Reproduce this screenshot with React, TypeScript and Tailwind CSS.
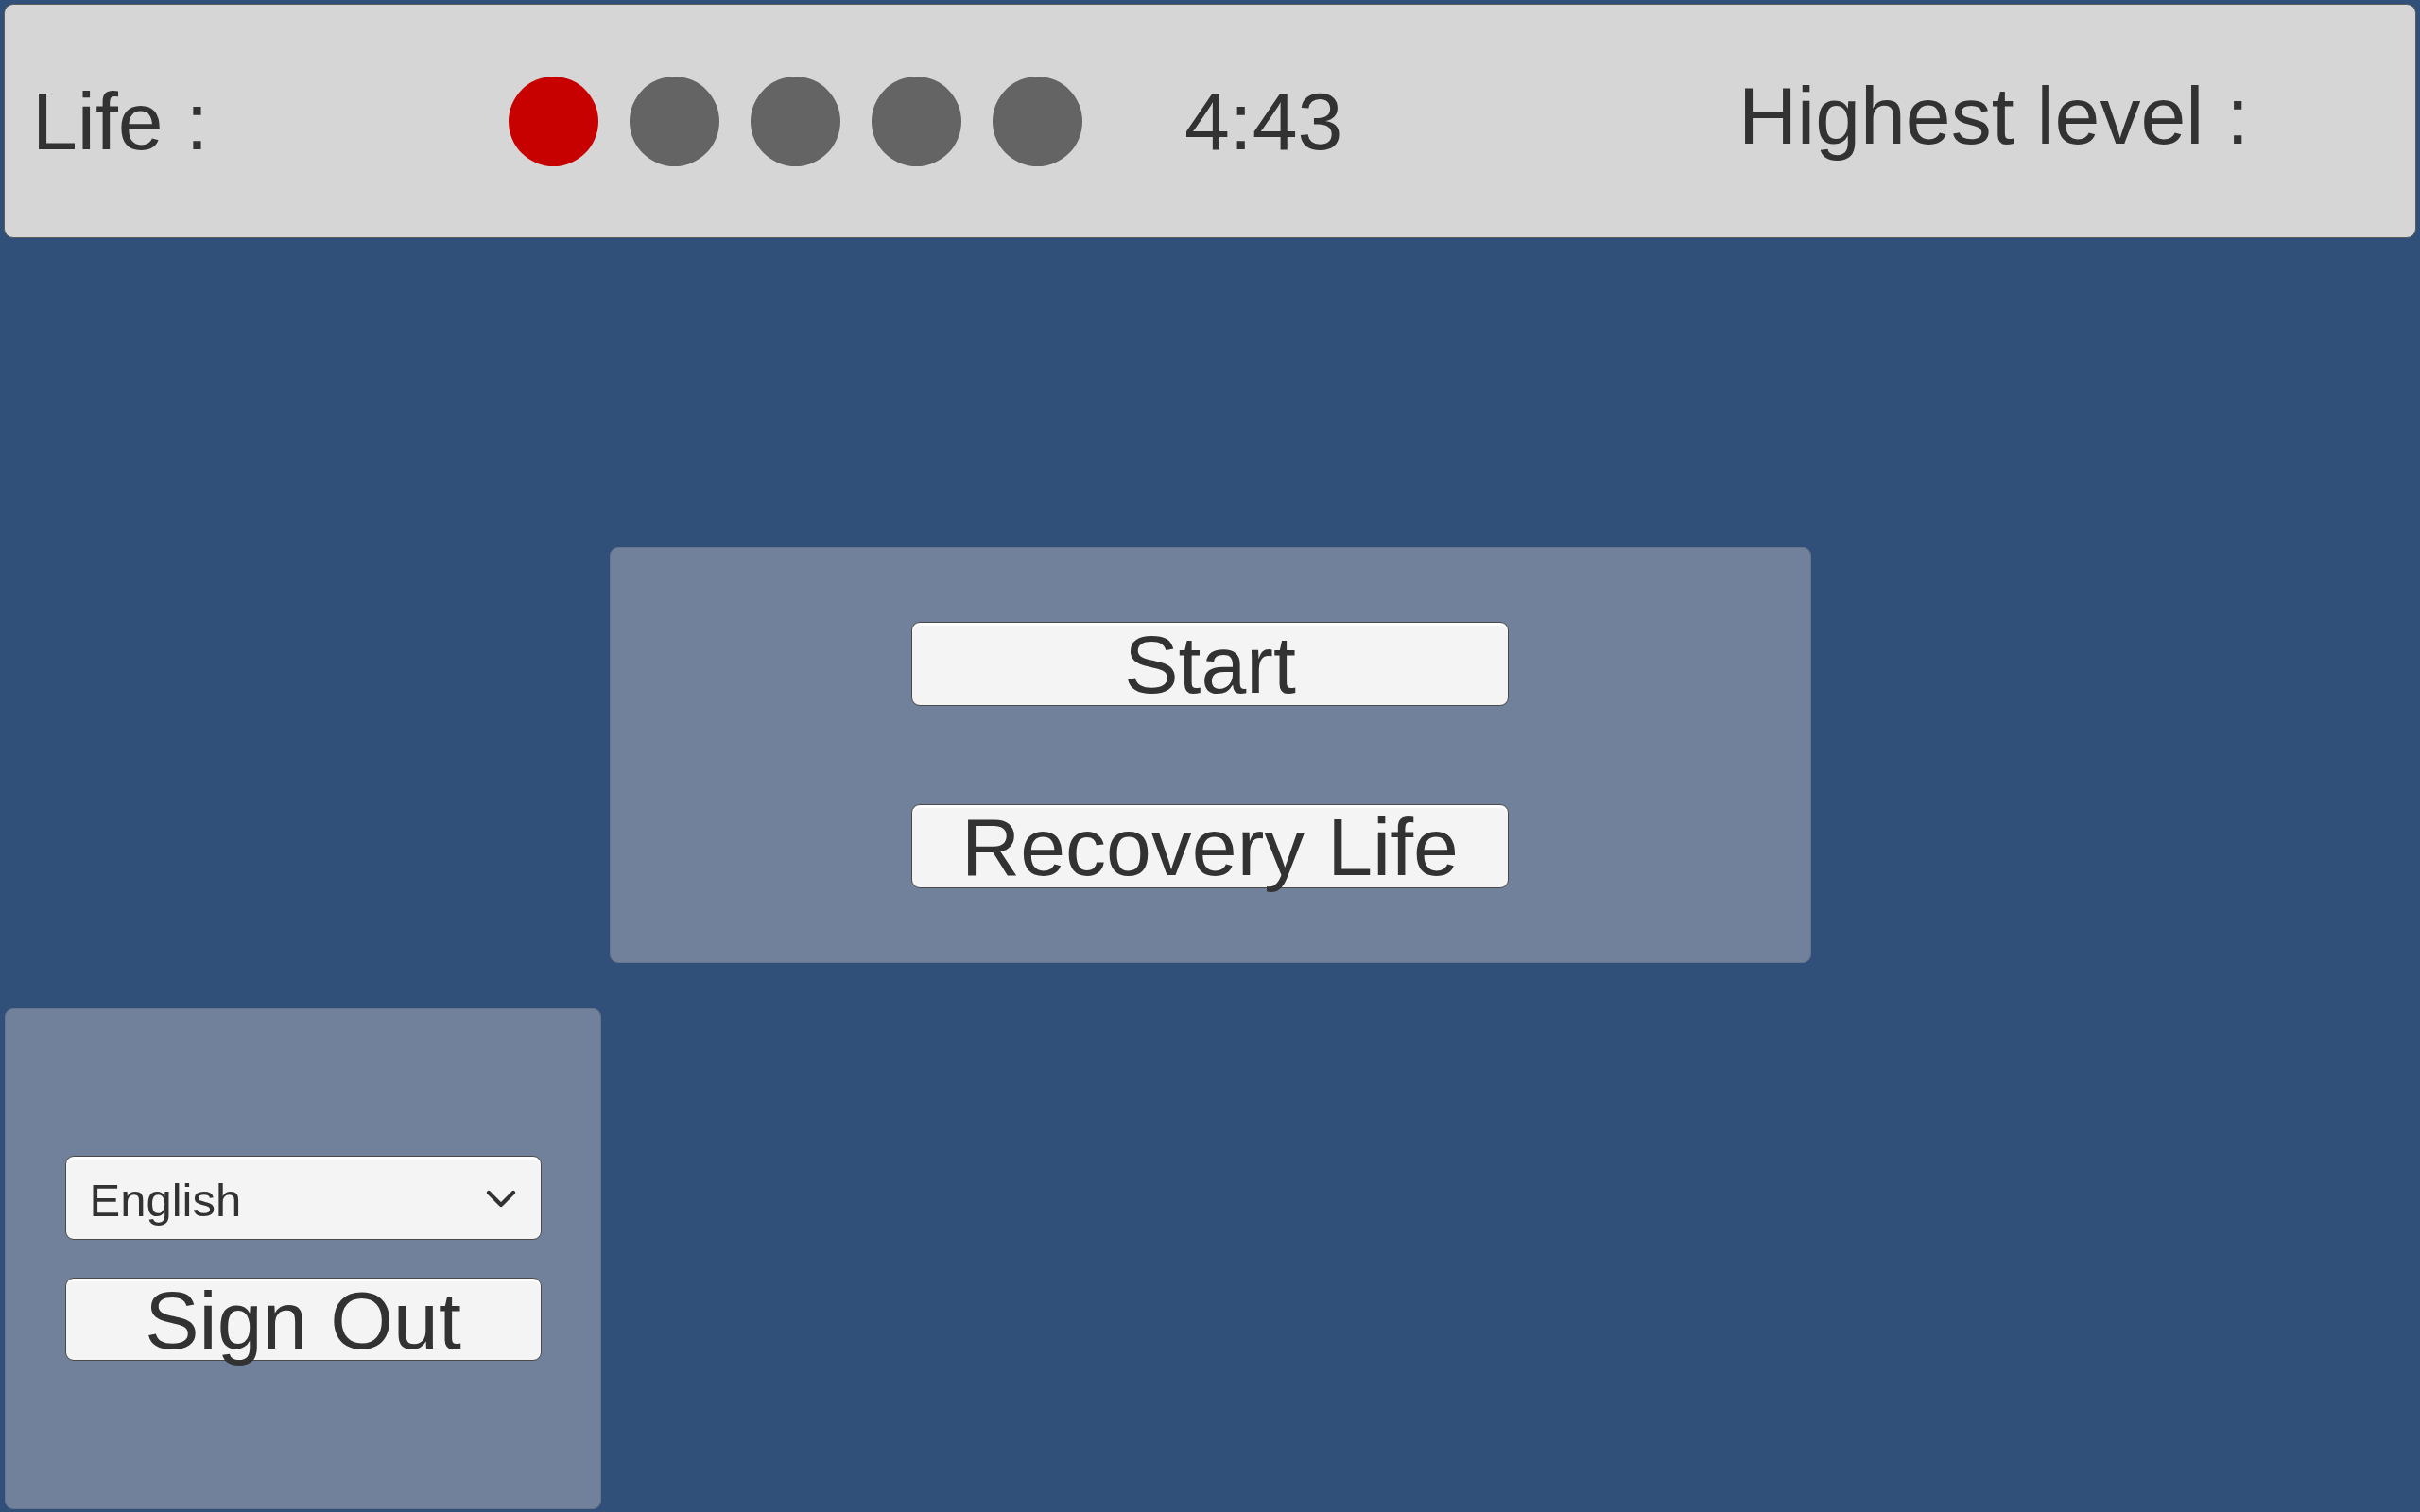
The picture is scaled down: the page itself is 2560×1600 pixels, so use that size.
const lives = [true, false, false, false, false]

const font = { fontFamily: '"Liberation Sans", Arial, sans-serif' }

function MenuButton({ label }: { label: string }) {
  return (
    <button
      type="button"
      className="w-[632px] h-[89px] rounded-[9px] border-[1.5px] border-[#494949] bg-[#f4f4f4] shadow-[inset_0_3px_0_#ffffff] flex items-center justify-center text-[86px] leading-none text-[#323232]"
    >
      {label}
    </button>
  )
}

export default function App() {
  return (
    <div style={font} className="w-[2560px] h-[1600px] bg-[#304f79] flex flex-col overflow-hidden">
      {/* status bar */}
      <header className="mx-[4px] mt-[4px] h-[248px] rounded-[10px] border border-[#5c5c5c] bg-[#d6d6d6] flex items-center text-[#323232] text-[86px] leading-none">
        <div className="ml-[29px] w-[504px]">Life :</div>
        <div className="flex gap-[33px]">
          {lives.map((alive, i) => (
            <div
              key={i}
              className={alive ? "w-[95px] h-[95px] rounded-full bg-[#c70000]" : "w-[95px] h-[95px] rounded-full bg-[#646464]"}
            />
          ))}
        </div>
        <div className="ml-[108px] w-[586px] pb-[1px]">4:43</div>
        <div className="mb-[13px]">Highest level :</div>
      </header>

      {/* main menu */}
      <section className="mt-[327px] mx-auto w-[1271px] h-[440px] rounded-[9px] border border-[#66758d] bg-[#71819b] flex flex-col items-center justify-center gap-[104px]">
        <MenuButton label="Start" />
        <MenuButton label="Recovery Life" />
      </section>

      {/* settings */}
      <aside className="mt-[48px] ml-[5px] w-[631px] h-[530px] rounded-[9px] border border-[#66758d] bg-[#71819b] flex flex-col items-center pt-[155px] gap-[40px]">
        <div className="w-[504px] h-[89px] rounded-[9px] border-[1.5px] border-[#494949] bg-[#f4f4f4] shadow-[inset_0_3px_0_#ffffff] flex items-start justify-between pl-[25px] pr-[26px] text-[49px] leading-none text-[#323232]">
          <span className="mt-[22px]">English</span>
          <svg className="mt-[35px]" width="32" height="20" viewBox="0 0 32 20" fill="none">
            <path d="M3 3 L16 16 L29 3" stroke="#323232" strokeWidth="4.2" strokeLinecap="round" strokeLinejoin="round" />
          </svg>
        </div>
        <button
          type="button"
          className="w-[504px] h-[88px] rounded-[9px] border-[1.5px] border-[#494949] bg-[#f4f4f4] shadow-[inset_0_3px_0_#ffffff] flex items-center justify-center pt-[2px] text-[86px] leading-none text-[#323232]"
        >
          Sign Out
        </button>
      </aside>
    </div>
  )
}
